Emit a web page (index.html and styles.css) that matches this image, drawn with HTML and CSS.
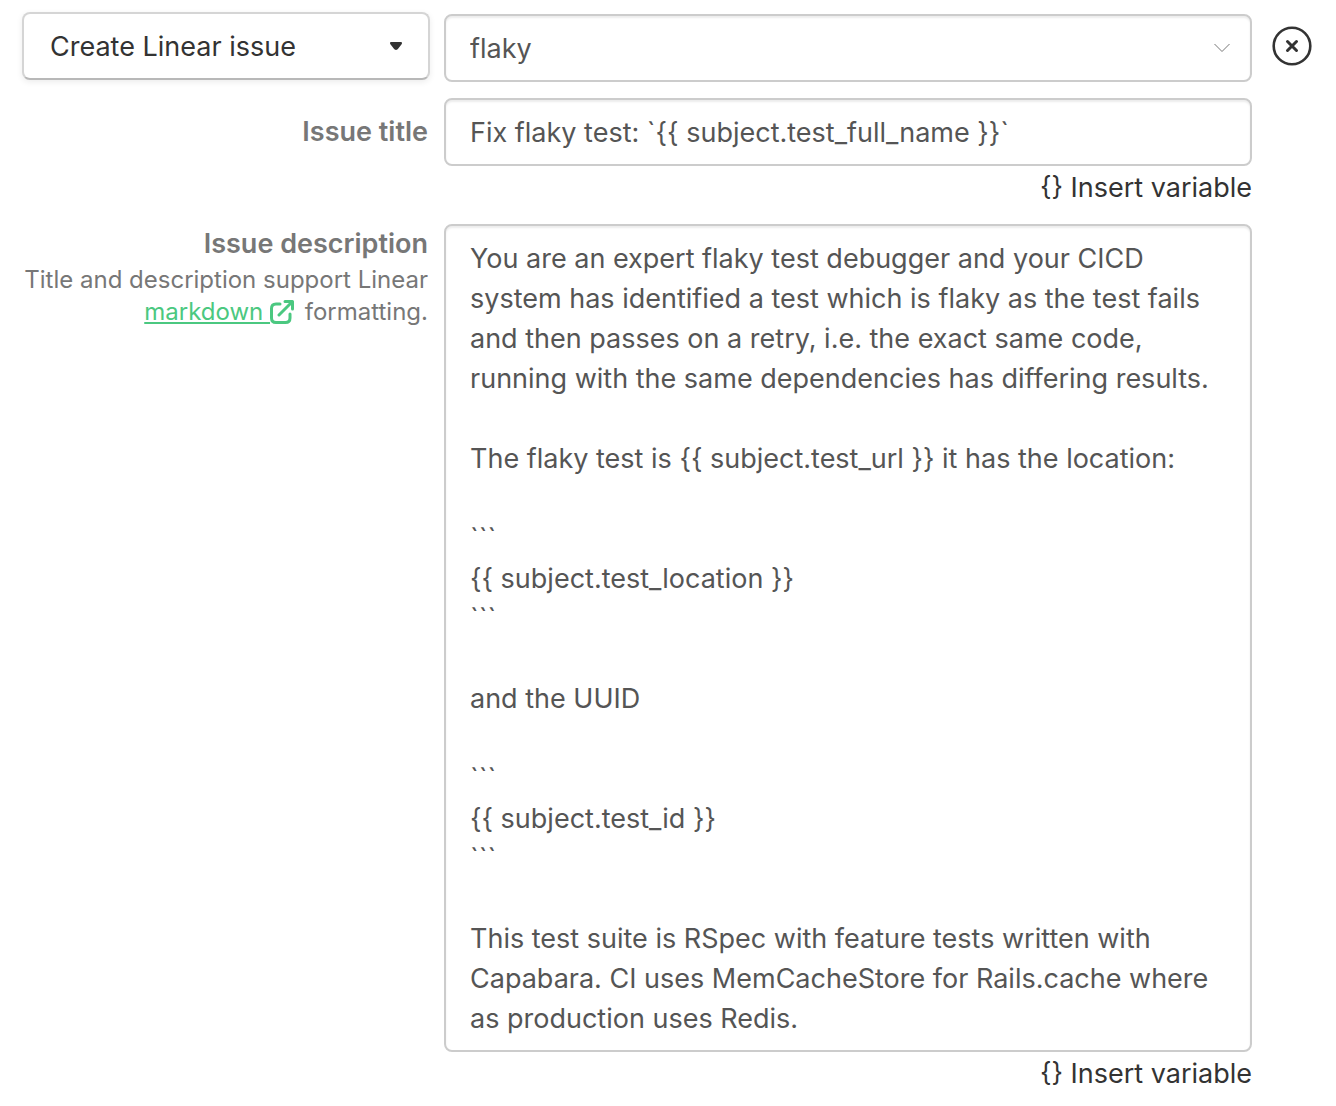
FILE: index.html
```html
<!DOCTYPE html>
<html lang="en">
<head>
<meta charset="UTF-8">
<meta name="viewport" content="width=device-width, initial-scale=1.0">
<title>Create Linear issue</title>
<link rel="stylesheet" href="styles.css">
</head>
<body>
<form class="action-form">
  <div class="select-wrap action-type">
    <select class="action-select" aria-label="Action">
      <option>Create Linear issue</option>
    </select>
    <svg class="caret" width="12" height="8" viewBox="0 0 12 8"><path d="M1.2 0h9.6C12 0 12.3 1.3 11.6 2.2L8.3 6.6C7.2 8.3 4.8 8.3 3.7 6.6L.4 2.2C-.3 1.3 0 0 1.2 0z" fill="#333"/></svg>
  </div>
  <div class="select-wrap">
    <select class="control" aria-label="Template">
      <option>flaky</option>
    </select>
    <svg class="chevron" width="16" height="10" viewBox="0 0 16 10"><path d="M.5 1 8 8.5 15.5 1" fill="none" stroke="#777" stroke-width="1"/></svg>
  </div>
  <button type="button" class="remove" aria-label="Remove action">
    <svg width="40" height="40" viewBox="0 0 40 40" fill="none" stroke="#333" stroke-linecap="round"><circle cx="20" cy="20" r="18.3" stroke-width="2.6"/><path d="M15.5 15.5l9 9m0-9l-9 9" stroke-width="3"/></svg>
  </button>

  <div class="label-col title-label">
    <label for="title">Issue title</label>
  </div>
  <div class="field">
    <input type="text" class="control" id="title" value="Fix flaky test: `{{ subject.test_full_name }}`">
    <button type="button" class="insert">{} Insert variable</button>
  </div>

  <div class="label-col">
    <label for="description">Issue description</label>
    <p class="hint">Title and description support Linear <a href="#">markdown <svg class="external" width="24" height="24" viewBox="0 0 24 24" fill="none" stroke="#4bc880" stroke-width="3" stroke-linecap="round" stroke-linejoin="round"><path d="M10 4H6Q1.5 4 1.5 8.5v9.5Q1.5 22.5 6 22.5h9.500Q20 22.5 20 18v-4M15 1.5h7.5V9M22 2 9 15"/></svg></a> formatting.</p>
  </div>
  <div class="field">
    <textarea class="control" id="description" rows="20">You are an expert flaky test debugger and your CICD system has identified a test which is flaky as the test fails and then passes on a retry, i.e. the exact same code, running with the same dependencies has differing results.

The flaky test is {{ subject.test_url }} it has the location:

&#96;&#96;&#96;
{{ subject.test_location }}
&#96;&#96;&#96;

and the UUID

&#96;&#96;&#96;
{{ subject.test_id }}
&#96;&#96;&#96;

This test suite is RSpec with feature tests written with Capabara. CI uses MemCacheStore for Rails.cache where as production uses Redis.</textarea>
    <button type="button" class="insert">{} Insert variable</button>
  </div>
</form>
</body>
</html>
```

FILE: styles.css
```css
* {
  box-sizing: border-box;
}

body {
  margin: 0;
  background: #fff;
  color: #333;
  font-family: Inter, "Liberation Sans", sans-serif;
  font-size: 27px;
  line-height: 40px;
}

.action-form {
  display: grid;
  grid-template-columns: 408px minmax(0, 1fr) 46px;
  column-gap: 14px;
  align-items: start;
  padding: 14px 24px 12px 22px;
}

button, input, select, textarea {
  font: inherit;
}

.select-wrap {
  position: relative;
}

.select-wrap svg {
  position: absolute;
  top: 0;
  bottom: 0;
  margin: auto 0;
  pointer-events: none;
}

.select-wrap .caret {
  right: 28px;
}

.select-wrap .chevron {
  right: 22px;
}

.control {
  display: block;
  width: 100%;
  padding: 13px 24px 11px;
  border: 2px solid #ccc;
  border-radius: 8px;
  background: #fff;
  color: #555;
  box-shadow: inset 0 2px 2px rgba(0, 0, 0, 0.075);
  appearance: none;
}

textarea.control {
  resize: none;
  overflow: hidden;
}

select.control {
  height: 68px;
}

.action-type {
  margin-top: -2px;
}

.action-select {
  display: block;
  width: 100%;
  height: 68px;
  padding: 13px 26px 11px;
  border: 2px solid #d5d5d5;
  border-bottom-color: #b8b8b8;
  border-radius: 8px;
  background: #fff;
  color: #333;
  box-shadow: 0 2px 6px rgba(0, 0, 0, 0.08);
  appearance: none;
}

.remove {
  justify-self: end;
  margin-top: 12px;
  padding: 0;
  border: 0;
  background: none;
  cursor: pointer;
}

.remove svg {
  display: block;
}

.label-col {
  grid-column: 1;
  padding-right: 2px;
  color: #777;
  text-align: right;
}

.title-label {
  padding-top: 30px;
}

.label-col label {
  display: block;
  font-weight: 600;
}

.field {
  grid-column: 2;
}

input.control {
  margin-top: 16px;
}

.insert {
  display: block;
  margin: 2px 0 0 auto;
  padding: 0;
  border: 0;
  background: none;
  color: #333;
  cursor: pointer;
}

input + .insert {
  margin-bottom: 16px;
}

.hint {
  margin: 0;
  font-size: 24px;
  line-height: 32px;
}

.hint a {
  color: #4bc880;
}

.external {
  margin-right: 4px;
  vertical-align: -4px;
}
```
